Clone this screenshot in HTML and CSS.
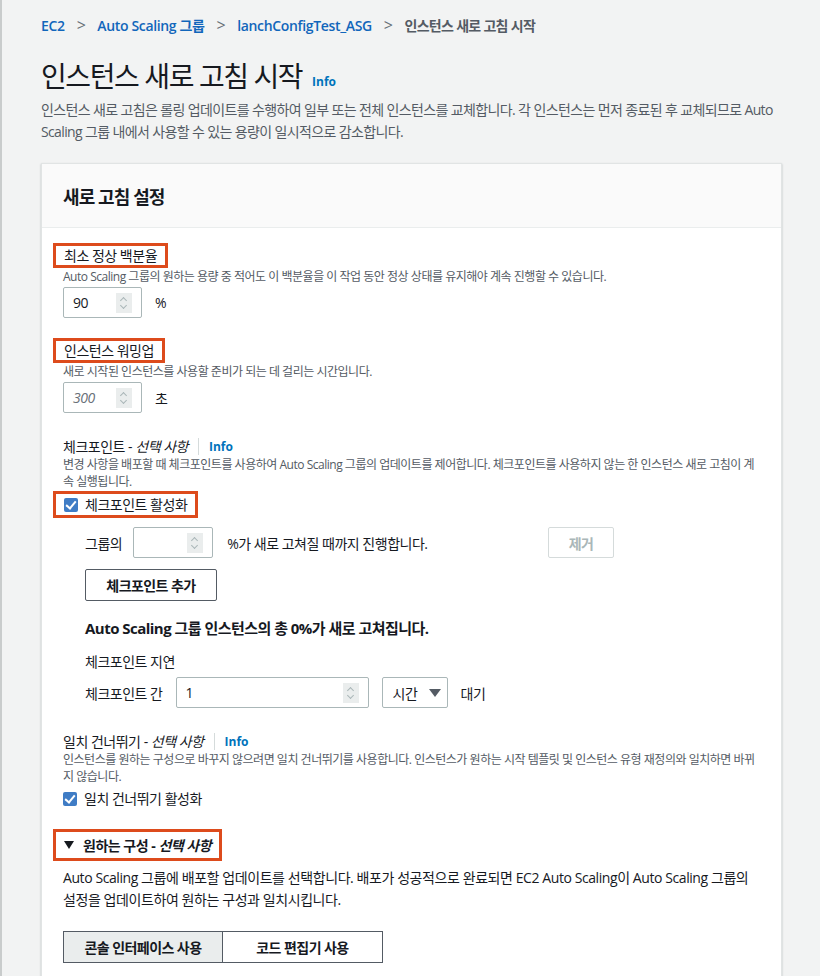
FILE: index.html
```html
<!DOCTYPE html>
<html lang="ko">
<head>
  <meta charset="UTF-8" />
  <meta name="viewport" content="width=device-width, initial-scale=1.0" />
  <title>인스턴스 새로 고침 시작</title>
  <link rel="stylesheet" href="styles.css">
</head>
<body>
  <div class="page">
    <!-- Breadcrumbs -->
    <nav class="crumbs">
      <a href="#">EC2</a>
      <span class="sep">&gt;</span>
      <a href="#">Auto Scaling 그룹</a>
      <span class="sep">&gt;</span>
      <a href="#">lanchConfigTest_ASG</a>
      <span class="sep">&gt;</span>
      <span class="current">인스턴스 새로 고침 시작</span>
    </nav>

    <h1 class="title">인스턴스 새로 고침 시작 <a class="info" href="#">Info</a></h1>
    <p class="lead">인스턴스 새로 고침은 롤링 업데이트를 수행하여 일부 또는 전체 인스턴스를 교체합니다. 각 인스턴스는 먼저 종료된 후 교체되므로 Auto Scaling 그룹 내에서 사용할 수 있는 용량이 일시적으로 감소합니다.</p>

    <section class="card">
      <div class="card-head">
        <h2>새로 고침 설정</h2>
      </div>
      <div class="card-body">

        <!-- Minimum healthy percentage -->
        <div class="field">
          <div class="mark"><span class="label">최소 정상 백분율</span></div>
          <p class="hint">Auto Scaling 그룹의 원하는 용량 중 적어도 이 백분율을 이 작업 동안 정상 상태를 유지해야 계속 진행할 수 있습니다.</p>
          <div class="row">
            <div class="num w78"><span class="val">90</span><span class="spin"></span></div>
            <span class="unit">%</span>
          </div>
        </div>

        <!-- Warmup -->
        <div class="field">
          <div class="mark"><span class="label">인스턴스 워밍업</span></div>
          <p class="hint">새로 시작된 인스턴스를 사용할 준비가 되는 데 걸리는 시간입니다.</p>
          <div class="row">
            <div class="num w78"><span class="val ph">300</span><span class="spin"></span></div>
            <span class="unit">초</span>
          </div>
        </div>

        <!-- Checkpoints -->
        <div class="field opt">
          <div class="label-row"><span class="label">체크포인트 - <em>선택 사항</em></span><a class="info bar" href="#">Info</a></div>
          <p class="hint">변경 사항을 배포할 때 체크포인트를 사용하여 Auto Scaling 그룹의 업데이트를 제어합니다. 체크포인트를 사용하지 않는 한 인스턴스 새로 고침이 계속 실행됩니다.</p>
          <div class="mark check-mark">
            <label class="check"><span class="box"></span>체크포인트 활성화</label>
          </div>

          <div class="nested">
            <div class="row cp-row">
              <span>그룹의</span>
              <div class="num w80"><span class="val"></span><span class="spin"></span></div>
              <span>%가 새로 고쳐질 때까지 진행합니다.</span>
              <button class="btn disabled">제거</button>
            </div>
            <button class="btn add">체크포인트 추가</button>
            <p class="total">Auto Scaling 그룹 인스턴스의 총 0%가 새로 고쳐집니다.</p>
            <p class="sub-label">체크포인트 지연</p>
            <div class="row">
              <span>체크포인트 간</span>
              <div class="num w193"><span class="val">1</span><span class="spin"></span></div>
              <div class="select">시간 <span class="caret"></span></div>
              <span>대기</span>
            </div>
          </div>
        </div>

        <!-- Skip matching -->
        <div class="field opt">
          <div class="label-row"><span class="label">일치 건너뛰기 - <em>선택 사항</em></span><a class="info bar" href="#">Info</a></div>
          <p class="hint">인스턴스를 원하는 구성으로 바꾸지 않으려면 일치 건너뛰기를 사용합니다. 인스턴스가 원하는 시작 템플릿 및 인스턴스 유형 재정의와 일치하면 바뀌지 않습니다.</p>
          <label class="check plain"><span class="box"></span>일치 건너뛰기 활성화</label>
        </div>

        <!-- Desired configuration -->
        <div class="mark expand"><span class="caret dark"></span><span>원하는 구성 - <em>선택 사항</em></span></div>
        <p class="body-text">Auto Scaling 그룹에 배포할 업데이트를 선택합니다. 배포가 성공적으로 완료되면 EC2 Auto Scaling이 Auto Scaling 그룹의 설정을 업데이트하여 원하는 구성과 일치시킵니다.</p>
        <div class="segments">
          <button class="seg on">콘솔 인터페이스 사용</button>
          <button class="seg">코드 편집기 사용</button>
        </div>
      </div>
    </section>
  </div>
</body>
</html>
```

FILE: styles.css
```css
/* Global */
body {
  margin: 0;
  background: #f2f3f3;
  font-family: "Open Sans", "Noto Sans CJK KR", sans-serif;
  color: #16191f;
  font-size: 14px;
  letter-spacing: -0.035em;
}

.page {
  border-left: 2px solid #c9cccc;
  min-height: 976px;
  padding: 0 38px 0 39px;
  box-sizing: border-box;
}

a {
  color: #0073bb;
  text-decoration: none;
}

/* Breadcrumbs */
.crumbs {
  display: flex;
  align-items: center;
  gap: 11px;
  height: 50px;
  font-size: 14px;
}

.crumbs a {
  font-weight: 600;
  color: #1166bb;
  letter-spacing: -0.025em;
}

.crumbs .sep {
  color: #687078;
  font-size: 16px;
  margin: 0 1px;
}

.crumbs .current {
  color: #545b64;
  font-weight: 700;
  font-size: 14px;
  letter-spacing: -0.05em;
}

/* Page heading */
.title {
  margin: 6px 0 0;
  font-size: 28px;
  font-weight: 400;
  line-height: 40px;
  letter-spacing: -1.4px;
}

.info {
  font-size: 12px;
  font-weight: 700;
  letter-spacing: 0;
  vertical-align: 1px;
  margin-left: 4px;
}

.lead {
  margin: -3px 0 0;
  color: #545b64;
  line-height: 22px;
  font-size: 14px;
  letter-spacing: -0.045em;
}

/* Card */
.card {
  margin-top: 20px;
  width: 739px;
  background: #fff;
  border: 1px solid #e1e4e4;
  border-bottom: none;
  box-shadow: 0 1px 2px rgba(0, 28, 36, 0.25);
}

.card-head {
  background: #fafafa;
  border-bottom: 1px solid #eaeded;
  height: 63px;
  display: flex;
  align-items: center;
  padding: 0 21px;
}

.card-head h2 {
  margin: 0;
  font-size: 18px;
  font-weight: 700;
  letter-spacing: -0.05em;
}

.card-body {
  padding: 15px 21px 14px 11px;
}

/* Annotated red boxes */
.mark {
  display: inline-flex;
  align-items: center;
  border: 3px solid #dd4b1c;
  padding: 0 8px;
}

.field {
  margin-bottom: 20px;
}

.field.opt {
  padding-top: 3px;
}

.label {
  font-size: 14px;
  line-height: 19px;
}

.label em, .expand em {
  font-style: italic;
}

.label-row {
  display: flex;
  align-items: center;
  padding-left: 10px;
  height: 20px;
}

.info.bar {
  border-left: 1px solid #d5dbdb;
  padding-left: 10px;
  margin-left: 10px;
  vertical-align: 0;
}

.hint {
  margin: 0;
  padding-left: 10px;
  font-size: 12px;
  line-height: 17px;
  color: #545b64;
  letter-spacing: -0.04em;
}

.row {
  display: flex;
  align-items: center;
  gap: 13px;
  margin-top: 2px;
  padding-left: 10px;
}

/* Number inputs */
.num {
  height: 31px;
  box-sizing: border-box;
  border: 1px solid #aab7b8;
  border-radius: 2px;
  display: flex;
  align-items: center;
  justify-content: space-between;
  padding: 0 9px 0 9px;
  font-size: 14px;
}

.w78 { width: 79px; }
.w80 { width: 80px; }
.w193 { width: 193px; }

.val.ph {
  color: #687078;
  font-style: italic;
}

.spin {
  width: 16px;
  height: 20px;
  background: #eaeded;
  position: relative;
}

.spin::before, .spin::after {
  content: "";
  position: absolute;
  left: 5px;
  width: 4px;
  height: 4px;
  border-left: 1px solid #aab7b8;
  border-top: 1px solid #aab7b8;
}

.spin::before {
  top: 5px;
  transform: rotate(45deg);
}

.spin::after {
  top: 10px;
  transform: rotate(225deg);
}

/* Checkboxes */
.check {
  display: flex;
  align-items: center;
  gap: 7px;
  font-size: 14px;
  line-height: 21px;
}

.check-mark {
  margin-top: 1px;
}

.check.plain {
  margin: 3px 0 0 10px;
}

.box {
  width: 14px;
  height: 14px;
  border-radius: 2px;
  background: #3f7cc5;
  position: relative;
}

.box::after {
  content: "";
  position: absolute;
  left: 4px;
  top: 1px;
  width: 4px;
  height: 8px;
  border-right: 2px solid #fff;
  border-bottom: 2px solid #fff;
  transform: rotate(40deg);
}

/* Checkpoint details */
.nested {
  padding-left: 22px;
  margin-top: 9px;
}

.cp-row {
  gap: 0;
  width: 539px;
  box-sizing: border-box;
}

.cp-row .num {
  margin: 0 14px 0 11px;
}

.btn {
  font-family: inherit;
  font-size: 14px;
  font-weight: 700;
  letter-spacing: -0.04em;
  background: #fff;
  border: 1px solid #545b64;
  border-radius: 2px;
  color: #545b64;
  height: 32px;
  padding: 0 20px;
}

.btn.disabled {
  margin-left: auto;
  border-color: #d5dbdb;
  color: #aab7b8;
  width: 66px;
  padding: 0;
  height: 31px;
}

.btn.add {
  margin: 11px 0 0 10px;
  width: 132px;
  padding: 0;
  color: #16191f;
}

.total {
  margin: 16px 0 0 10px;
  font-size: 15px;
  font-weight: 700;
  line-height: 22px;
  letter-spacing: -0.035em;
}

.sub-label {
  margin: 13px 0 0 10px;
  line-height: 20px;
}

.nested .row {
  margin-top: 5px;
}

.select {
  width: 66px;
  height: 31px;
  box-sizing: border-box;
  border: 1px solid #aab7b8;
  border-radius: 2px;
  display: flex;
  align-items: center;
  gap: 12px;
  padding-left: 10px;
}

.caret {
  width: 0;
  height: 0;
  border-left: 6px solid transparent;
  border-right: 6px solid transparent;
  border-top: 8px solid #545b64;
}

/* Desired configuration */
.expand {
  margin-top: 0;
  gap: 9px;
  font-weight: 700;
  height: 32px;
  box-sizing: border-box;
  color: #16191f;
}

.caret.dark {
  border-top-color: #16191f;
  border-left-width: 5px;
  border-right-width: 5px;
  border-top-width: 8px;
}

.body-text {
  margin: 6px 0 0 10px;
  line-height: 22px;
  letter-spacing: -0.03em;
}

.segments {
  display: flex;
  margin: 20px 0 0 10px;
}

.seg {
  font-family: inherit;
  font-size: 14px;
  font-weight: 700;
  letter-spacing: -0.04em;
  height: 32px;
  background: #fff;
  border: 1px solid #545b64;
  color: #16191f;
  width: 160px;
}

.seg + .seg {
  border-left: none;
}

.seg.on {
  background: #eaeded;
}
```
